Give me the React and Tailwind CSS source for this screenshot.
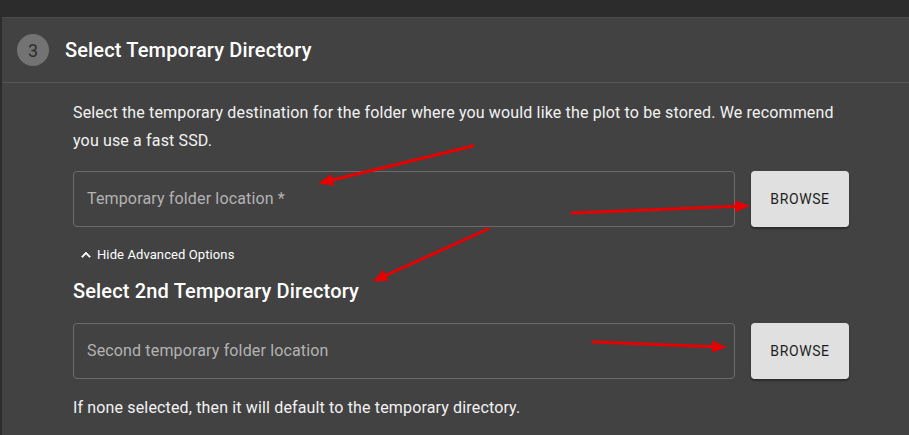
import React from "react";

function Arrow({ x1, y1, x2, y2 }) {
  return (
    <line x1={x1} y1={y1} x2={x2} y2={y2} stroke="#e80000" strokeWidth="3" strokeLinecap="round" markerEnd="url(#ah)" />
  );
}

function Row({ placeholder }) {
  return (
    <div className="flex gap-4 w-[776px]">
      <div className="flex-1 h-[56px] border border-[#6b6b6b] rounded-[4px] flex items-center px-[13px] text-[16px] tracking-[0.15px] text-[#b3b3b3]">
        {placeholder}
      </div>
      <div className="w-[98px] h-[56px] rounded-[4px] bg-[#e0e0e0] flex items-center justify-center text-[14px] font-normal tracking-[0.6px] text-[#1e1e1e] shadow-[0_2px_2px_rgba(0,0,0,0.35)]">
        BROWSE
      </div>
    </div>
  );
}

export default function App() {
  return (
    <div className="relative w-[909px] h-[435px] overflow-hidden bg-[#2c2c2c] font-['Roboto',sans-serif]">
      <div className="h-[17px]" />
      <div className="ml-[2px] h-[418px] bg-[#424242] border-t border-[#4a4a4a]">
        <div className="h-[65px] flex items-center border-b border-[#565656]">
          <div className="ml-[15px] w-[32px] h-[32px] rounded-full bg-[#737373] flex items-center justify-center text-[18px] text-[#2e2e2e]">
            3
          </div>
          <div className="ml-[16px] text-[20px] font-medium tracking-[0.15px] text-white">Select Temporary Directory</div>
        </div>
        <div className="pl-[71px] pt-[16px]">
          <p className="text-[16px] leading-[28px] tracking-[0.15px] text-[#f2f2f2] w-[790px] mb-[16px]">
            Select the temporary destination for the folder where you would like the plot to be stored. We recommend you use a fast SSD.
          </p>
          <Row placeholder="Temporary folder location *" />
          <div className="mt-[14px] ml-[4px] flex items-center gap-[2px] h-[28px] text-[13px] font-normal text-white tracking-[0.1px]">
            <svg width="18" height="18" viewBox="0 0 24 24" fill="white" stroke="white" strokeWidth="0.8"><path d="M12 8l-6 6 1.41 1.41L12 10.83l4.59 4.58L18 14z" /></svg>
            Hide Advanced Options
          </div>
          <div className="mt-[6px] text-[20px] font-medium tracking-[0.15px] text-white leading-[32px]">Select 2nd Temporary Directory</div>
          <div className="mt-[16px]">
            <Row placeholder="Second temporary folder location" />
          </div>
          <p className="mt-[15px] text-[16px] leading-[28px] tracking-[0.15px] text-[#f2f2f2]">
            If none selected, then it will default to the temporary directory.
          </p>
        </div>
      </div>
      <svg className="absolute left-0 top-0 pointer-events-none" width="909" height="435">
        <defs>
          <marker id="ah" markerWidth="5" markerHeight="4" refX="3" refY="2" orient="auto" markerUnits="strokeWidth">
            <path d="M0,0 L5,2 L0,4 z" fill="#e80000" />
          </marker>
        </defs>
        <Arrow x1={473} y1={146} x2={324} y2={182} />
        <Arrow x1={572} y1={213} x2={744} y2={206} />
        <Arrow x1={488} y1={229} x2={378} y2={279} />
        <Arrow x1={593} y1={342} x2={721} y2={347} />
      </svg>
    </div>
  );
}
